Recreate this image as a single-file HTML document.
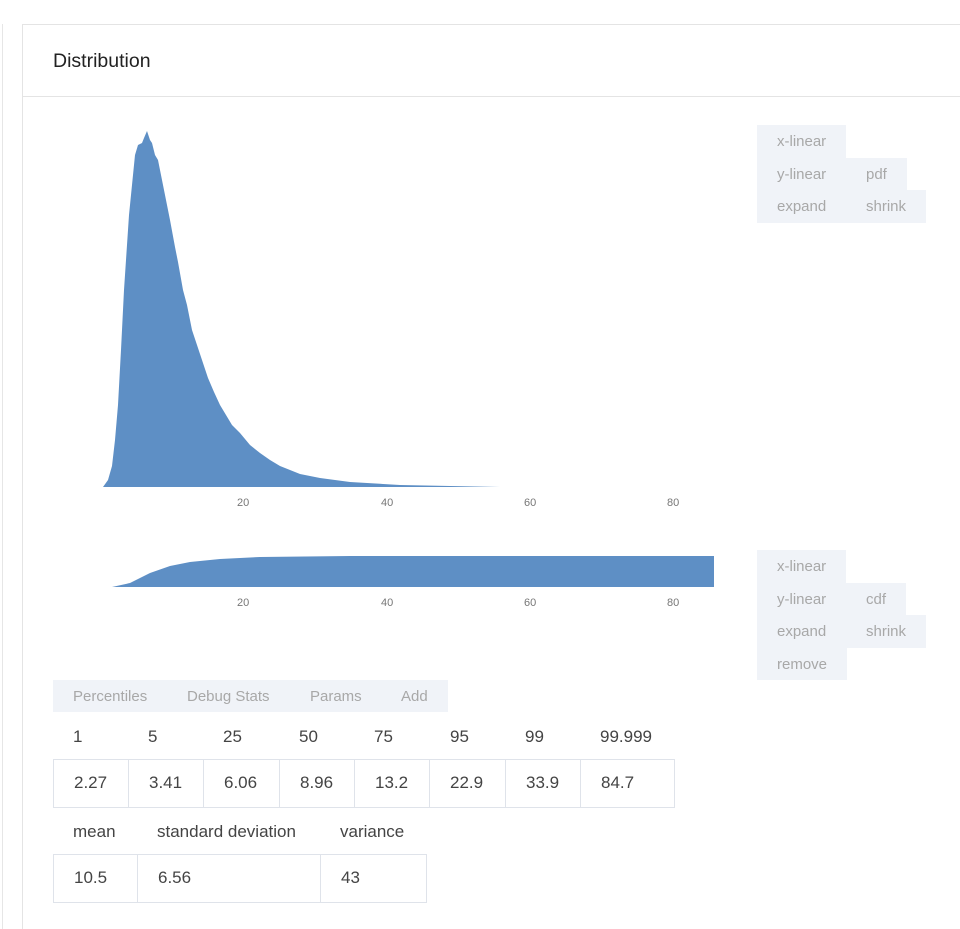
<!DOCTYPE html>
<html><head><meta charset="utf-8"><style>
html,body{margin:0;width:960px;height:929px;overflow:hidden}
body{background:#fff;font-family:"Liberation Sans",sans-serif;position:relative}
.a{position:absolute}
.b{position:absolute;background:#f0f3f8;color:#a8a8a8;font-size:15px;line-height:34px;box-sizing:border-box;padding-left:20px}
.t{position:absolute;color:#444;font-size:17px}
.c{position:absolute;border:1px solid #dfe3ea;box-sizing:border-box;color:#444;font-size:17px;line-height:46px;padding-left:20px}
.tk{position:absolute;font-size:11px;color:#777}
</style></head><body>
<div class="a" style="left:0;top:24px;width:2px;height:905px;border-right:1px solid #e6e6e6"></div>
<div class="a" style="left:22px;top:24px;width:938px;height:905px;border-left:1px solid #e4e4e4;border-top:1px solid #e4e4e4;box-sizing:border-box"></div>
<div class="a" style="left:23px;top:96px;width:937px;height:1px;background:#e4e4e4"></div>
<div class="a" style="left:53px;top:50px;font-size:19.5px;color:#222">Distribution</div>
<svg class="a" style="left:0;top:0" width="960" height="929">
<path fill="#5e8fc5" d="M103,487 L108,480 112,466 115,440 118,405 121,350 124,290 126,260 129,215 132,185 135,155 138,145 142,143 144,138 147,131 150,140 152,143 155,155 158,160 162,180 166,200 170,220 175,247 178,262 183,290 187,305 192,330 197,345 202,360 208,378 214,392 220,405 226,415 232,425 240,433 250,445 260,453 270,460 280,466 290,470 300,474 320,478 350,482 400,485 450,486 500,487 Z"/>
<path fill="#5e8fc5" d="M112,587 L130,583 150,573 170,566 190,562 220,559 260,557 350,556 714,556 714,587 Z"/>
</svg>
<div class="tk" style="left:237px;top:497px">20</div><div class="tk" style="left:381px;top:497px">40</div><div class="tk" style="left:524px;top:497px">60</div><div class="tk" style="left:667px;top:497px">80</div>
<div class="tk" style="left:237px;top:597px">20</div><div class="tk" style="left:381px;top:597px">40</div><div class="tk" style="left:524px;top:597px">60</div><div class="tk" style="left:667px;top:597px">80</div>
<div class="b" style="left:757px;top:125px;width:89px;height:33px">x-linear</div>
<div class="b" style="left:757px;top:158px;width:89px;height:32px">y-linear</div>
<div class="b" style="left:846px;top:158px;width:61px;height:32px">pdf</div>
<div class="b" style="left:757px;top:190px;width:89px;height:33px">expand</div>
<div class="b" style="left:846px;top:190px;width:80px;height:33px">shrink</div>
<div class="b" style="left:757px;top:550px;width:89px;height:33px">x-linear</div>
<div class="b" style="left:757px;top:583px;width:89px;height:32px">y-linear</div>
<div class="b" style="left:846px;top:583px;width:60px;height:32px">cdf</div>
<div class="b" style="left:757px;top:615px;width:89px;height:33px">expand</div>
<div class="b" style="left:846px;top:615px;width:80px;height:33px">shrink</div>
<div class="b" style="left:757px;top:648px;width:90px;height:32px">remove</div>
<div class="a" style="left:53px;top:680px;width:395px;height:32px;background:#f0f3f8"></div>
<div class="b" style="left:53px;top:680px;background:none">Percentiles</div>
<div class="b" style="left:167px;top:680px;background:none">Debug Stats</div>
<div class="b" style="left:290px;top:680px;background:none">Params</div>
<div class="b" style="left:381px;top:680px;background:none">Add</div>
<div class="t" style="left:73px;top:727px">1</div><div class="t" style="left:148px;top:727px">5</div><div class="t" style="left:223px;top:727px">25</div><div class="t" style="left:299px;top:727px">50</div><div class="t" style="left:374px;top:727px">75</div><div class="t" style="left:450px;top:727px">95</div><div class="t" style="left:525px;top:727px">99</div><div class="t" style="left:600px;top:727px">99.999</div>
<div class="c" style="left:53px;top:759px;width:76px;height:49px">2.27</div>
<div class="c" style="left:128px;top:759px;width:76px;height:49px">3.41</div>
<div class="c" style="left:203px;top:759px;width:77px;height:49px">6.06</div>
<div class="c" style="left:279px;top:759px;width:76px;height:49px">8.96</div>
<div class="c" style="left:354px;top:759px;width:76px;height:49px">13.2</div>
<div class="c" style="left:429px;top:759px;width:77px;height:49px">22.9</div>
<div class="c" style="left:505px;top:759px;width:76px;height:49px">33.9</div>
<div class="c" style="left:580px;top:759px;width:95px;height:49px">84.7</div>
<div class="t" style="left:73px;top:822px">mean</div><div class="t" style="left:157px;top:822px">standard deviation</div><div class="t" style="left:340px;top:822px">variance</div>
<div class="c" style="left:53px;top:854px;width:85px;height:49px">10.5</div>
<div class="c" style="left:137px;top:854px;width:184px;height:49px">6.56</div>
<div class="c" style="left:320px;top:854px;width:107px;height:49px">43</div>
</body></html>
